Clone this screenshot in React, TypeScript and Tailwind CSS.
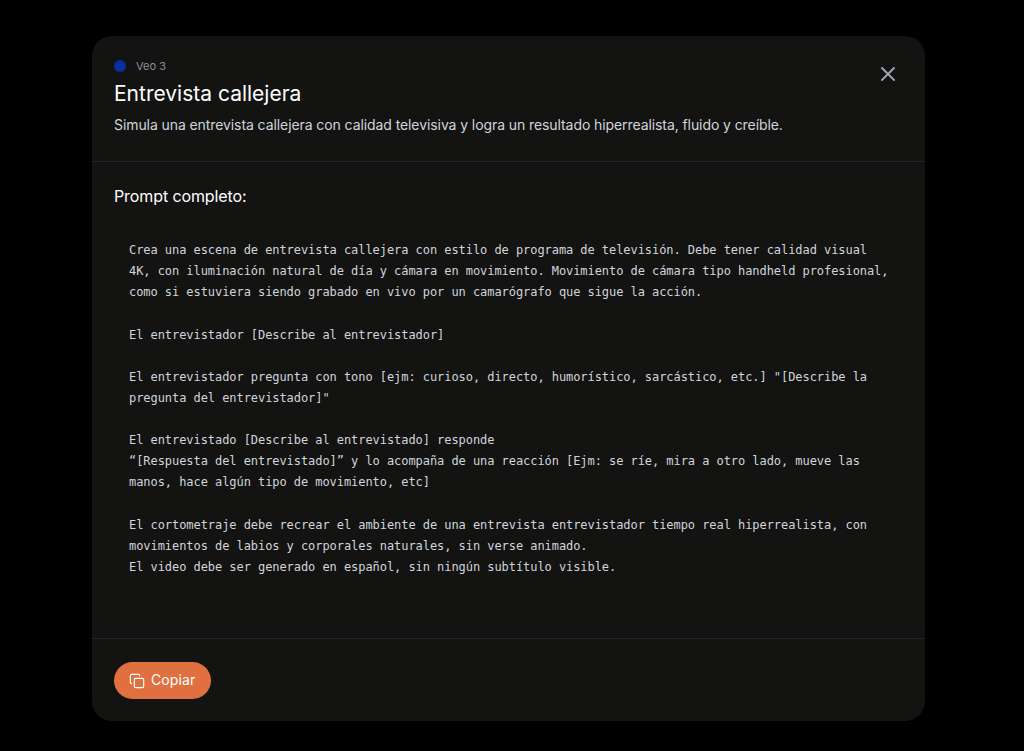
import { X, Copy } from "lucide-react";

const blocks = [
  [
    "Crea una escena de entrevista callejera con estilo de programa de televisión. Debe tener calidad visual",
    "4K, con iluminación natural de día y cámara en movimiento. Movimiento de cámara tipo handheld profesional,",
    "como si estuviera siendo grabado en vivo por un camarógrafo que sigue la acción.",
  ],
  ["El entrevistador [Describe al entrevistador]"],
  [
    'El entrevistador pregunta con tono [ejm: curioso, directo, humorístico, sarcástico, etc.] "[Describe la',
    'pregunta del entrevistador]"',
  ],
  [
    "El entrevistado [Describe al entrevistado] responde",
    "“[Respuesta del entrevistado]” y lo acompaña de una reacción [Ejm: se ríe, mira a otro lado, mueve las",
    "manos, hace algún tipo de movimiento, etc]",
  ],
  [
    "El cortometraje debe recrear el ambiente de una entrevista entrevistador tiempo real hiperrealista, con",
    "movimientos de labios y corporales naturales, sin verse animado.",
    "El video debe ser generado en español, sin ningún subtítulo visible.",
  ],
];

export default function App() {
  return (
    <div className="h-[751px] overflow-hidden bg-black pl-[92px] pt-[36px] font-['Inter',sans-serif]">
      <div className="flex h-[685px] w-[833px] flex-col rounded-[20px] bg-[#131312]">
        <header className="relative h-[126px] border-b border-[#1e2530] px-[22px] pt-[21px]">
          <div className="flex items-center gap-[10px]">
            <span className="h-3 w-3 rounded-full bg-[#0b2f9f]" />
            <span className="text-[11px] leading-[18px] text-[#8b929c]">Veo 3</span>
          </div>
          <h2 className="mt-[5px] text-[21px] leading-[28px] font-normal text-white">Entrevista callejera</h2>
          <p className="mt-[7px] text-[14px] leading-[20px] tracking-[-0.085px] text-[#d1d5db]">
            Simula una entrevista callejera con calidad televisiva y logra un resultado hiperrealista, fluido y creíble.
          </p>
          <button className="absolute top-[26px] right-[25px] text-[#9ca3af]">
            <X size={24} strokeWidth={2} />
          </button>
        </header>
        <main className="flex-1 px-[22px] pt-[22px]">
          <h3 className="text-[16px] leading-[24px] font-normal tracking-[-0.1px] text-white">Prompt completo:</h3>
          <div className="mt-[32px] flex flex-col gap-[21.125px] pl-[15px] font-['DejaVu_Sans_Mono',monospace] text-[12px] leading-[21.125px] tracking-[-0.06px] text-[#d1d5db]">
            {blocks.map((lines, i) => (
              <p key={i}>
                {lines.map((l, j) => (
                  <span key={j} className="block whitespace-pre">
                    {l}
                  </span>
                ))}
              </p>
            ))}
          </div>
        </main>
        <footer className="h-[83px] border-t border-[#1e2530] px-[22px] pt-[23px]">
          <button className="flex h-[37px] w-[97px] items-center gap-[6px] rounded-full bg-[#e07040] pl-[15px] text-[14px] font-normal tracking-[0.1px] text-white">
            <Copy size={16} strokeWidth={1.75} />
            <span className="-translate-y-px">Copiar</span>
          </button>
        </footer>
      </div>
    </div>
  );
}
